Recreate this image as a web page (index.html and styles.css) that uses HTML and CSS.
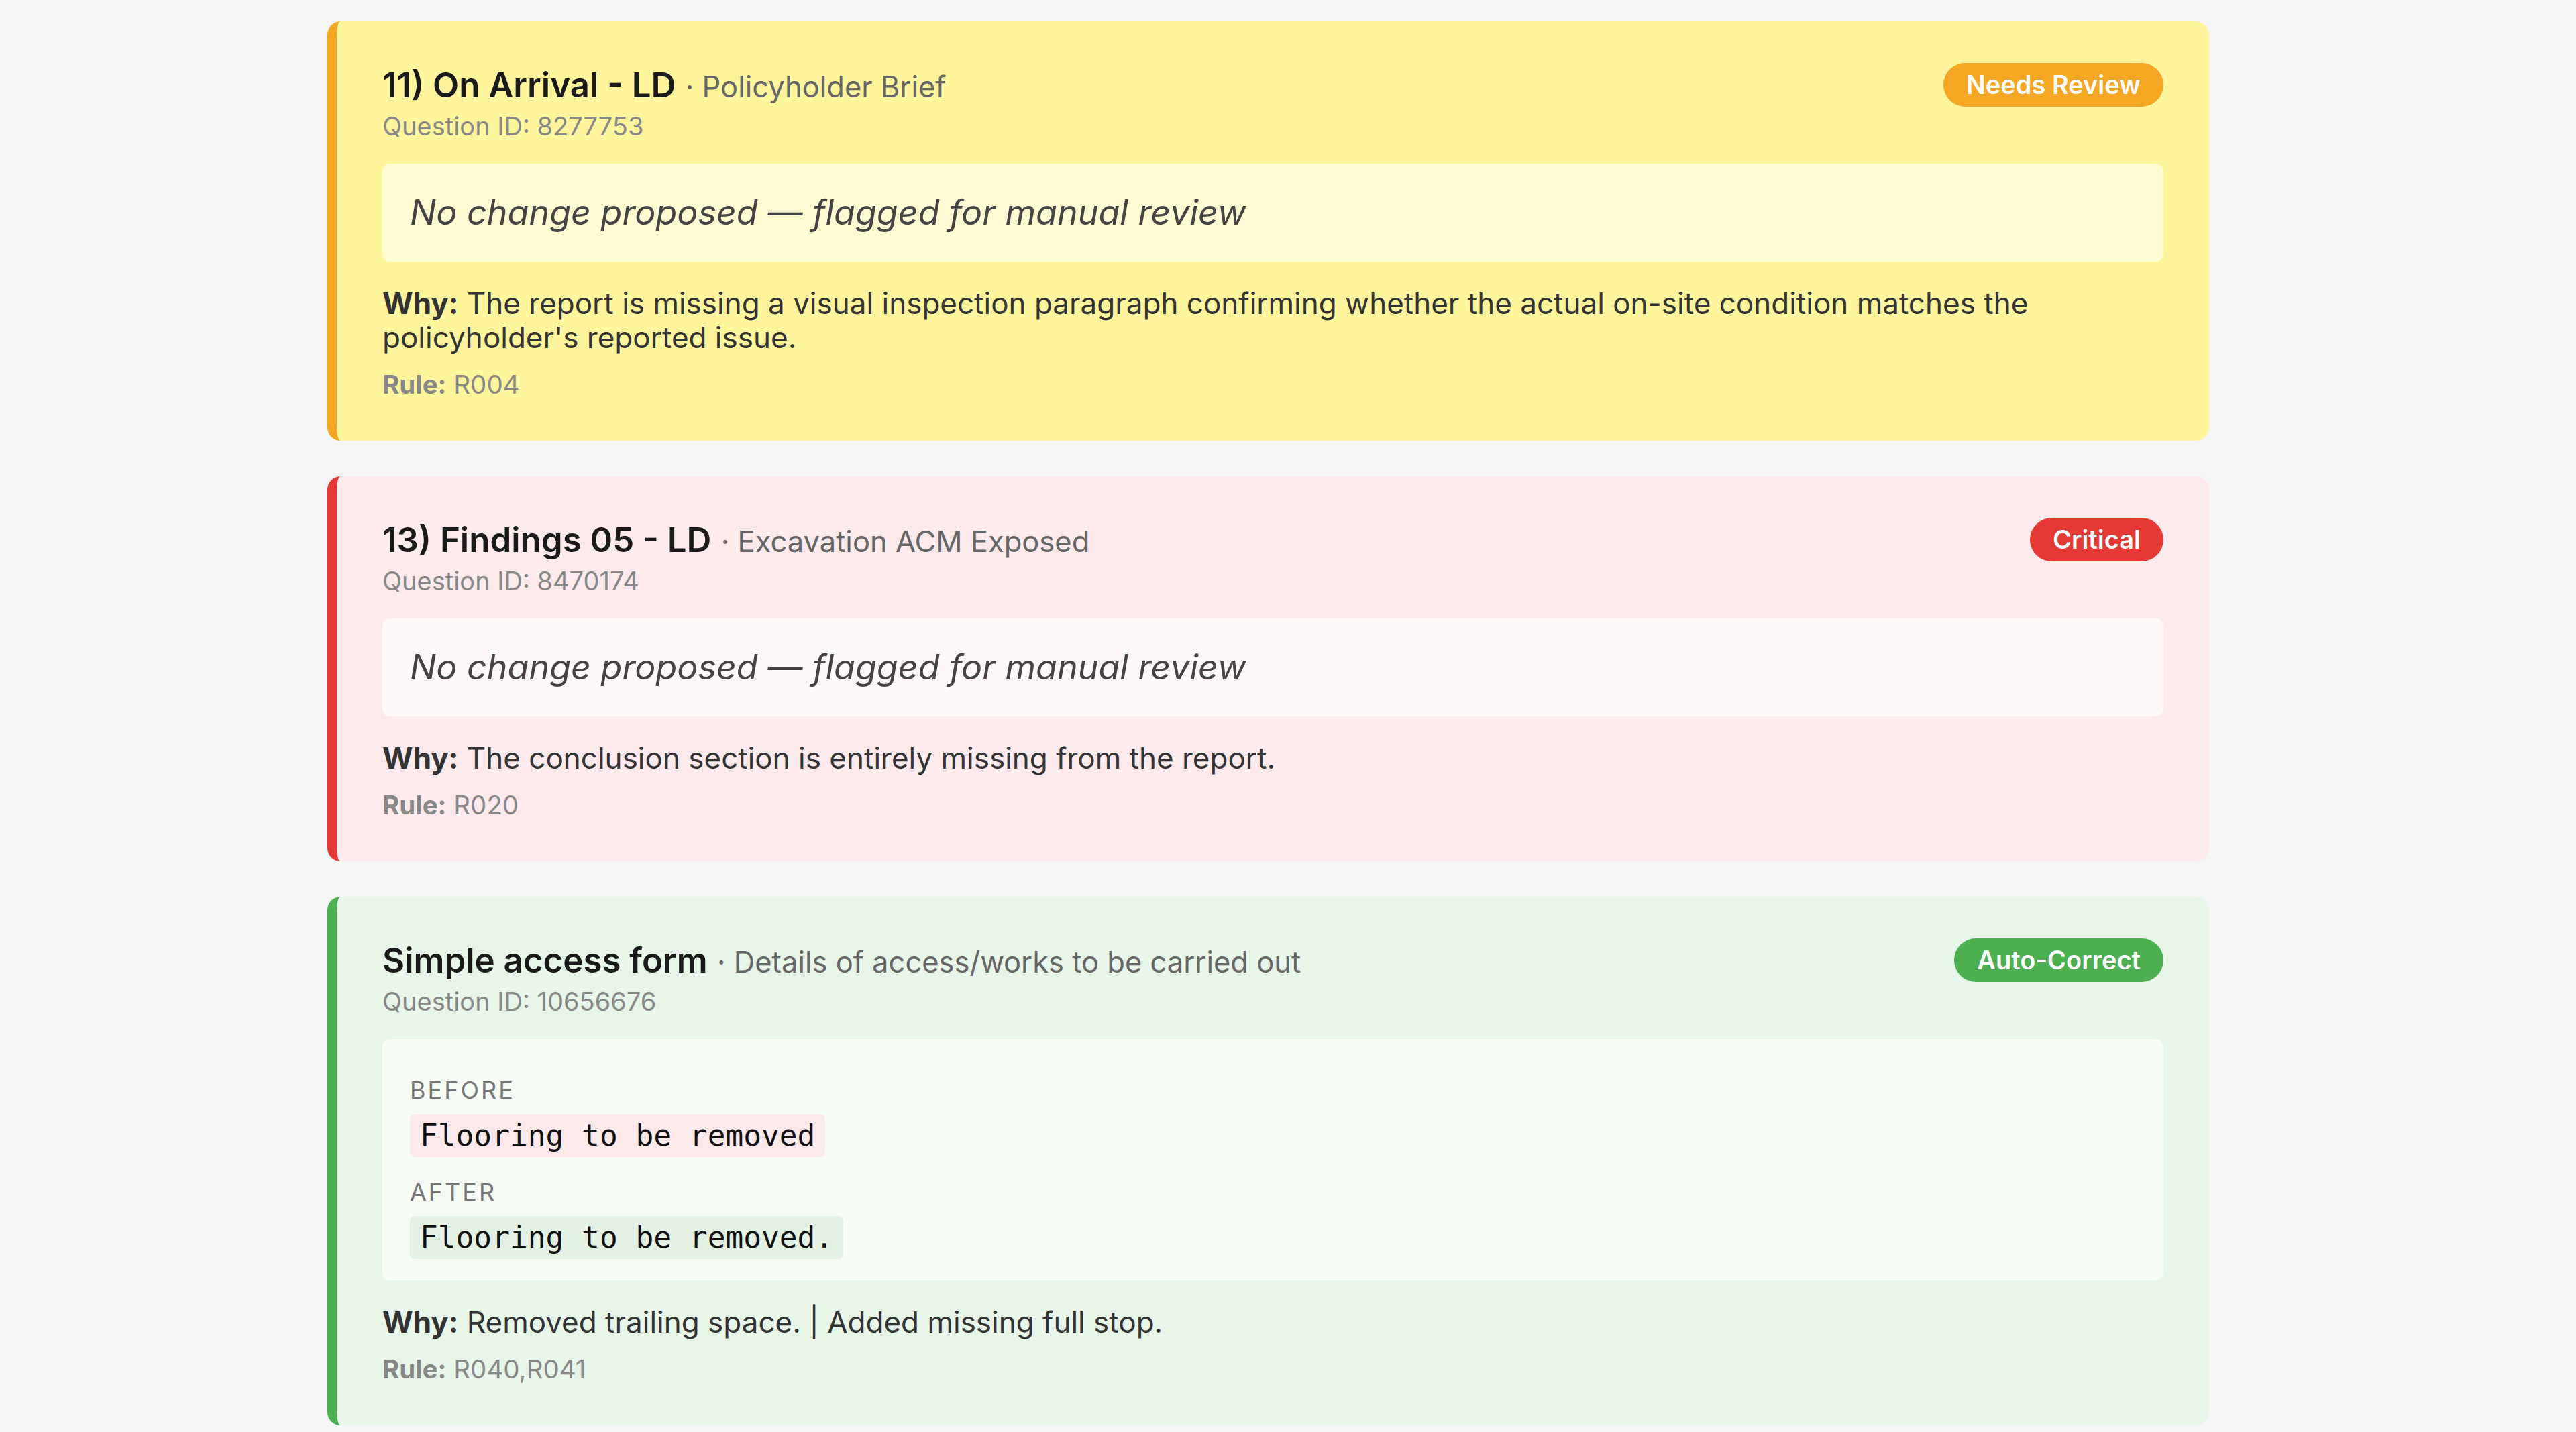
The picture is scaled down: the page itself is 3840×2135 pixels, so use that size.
FILE: index.html
```html
<!DOCTYPE html>
<html lang="en">
<head>
    <meta charset="UTF-8">
    <meta name="viewport" content="width=device-width, initial-scale=1.0">
    <title>Review Queue</title>
    <link rel="stylesheet" href="styles.css">
</head>
<body>
    <main class="queue">
        <article class="card card-review">
            <div class="card-head">
                <div class="card-titles">
                    <div class="card-title"><strong>11) On Arrival - LD</strong> <span class="card-sub">&middot; Policyholder Brief</span></div>
                    <div class="qid">Question ID: 8277753</div>
                </div>
                <span class="badge">Needs Review</span>
            </div>
            <div class="proposal">
                <em>No change proposed &mdash; flagged for manual review</em>
            </div>
            <p class="why"><b>Why:</b> The report is missing a visual inspection paragraph confirming whether the actual on-site condition matches the policyholder's reported issue.</p>
            <p class="rule"><b>Rule:</b> R004</p>
        </article>

        <article class="card card-critical">
            <div class="card-head">
                <div class="card-titles">
                    <div class="card-title"><strong>13) Findings 05 - LD</strong> <span class="card-sub">&middot; Excavation ACM Exposed</span></div>
                    <div class="qid">Question ID: 8470174</div>
                </div>
                <span class="badge">Critical</span>
            </div>
            <div class="proposal">
                <em>No change proposed &mdash; flagged for manual review</em>
            </div>
            <p class="why"><b>Why:</b> The conclusion section is entirely missing from the report.</p>
            <p class="rule"><b>Rule:</b> R020</p>
        </article>

        <article class="card card-auto">
            <div class="card-head">
                <div class="card-titles">
                    <div class="card-title"><strong>Simple access form</strong> <span class="card-sub">&middot; Details of access/works to be carried out</span></div>
                    <div class="qid">Question ID: 10656676</div>
                </div>
                <span class="badge">Auto-Correct</span>
            </div>
            <div class="proposal diff">
                <div class="diff-block">
                    <div class="diff-label">Before</div>
                    <code class="diff-code diff-before">Flooring to be removed</code>
                </div>
                <div class="diff-block">
                    <div class="diff-label">After</div>
                    <code class="diff-code diff-after">Flooring to be removed.</code>
                </div>
            </div>
            <p class="why"><b>Why:</b> Removed trailing space. | Added missing full stop.</p>
            <p class="rule"><b>Rule:</b> R040,R041</p>
        </article>
    </main>
</body>
</html>
```
FILE: styles.css
```css
body {
    font-family: Inter, 'Noto Sans', sans-serif;
    background-color: #f5f5f5;
    color: #333;
    margin: 0;
    padding: 32px 547px 0 488px;
}
.queue {
    display: flex;
    flex-direction: column;
    gap: 53px;
}
.card {
    border-radius: 20px;
    border-left: 14px solid transparent;
    padding: 62px 68px 61px 68px;
}
.card-review {
    background-color: #fff59d;
    border-left-color: #f5a623;
}
.card-critical {
    background-color: #fdeaec;
    border-left-color: #e53935;
}
.card-auto {
    background-color: #e8f5e9;
    border-left-color: #4caf50;
}
.card-head {
    display: flex;
    justify-content: space-between;
    align-items: flex-start;
}
.card-title {
    font-size: 51px;
    line-height: 66px;
    color: #1a1a1a;
}
.card-title strong {
    font-weight: 600;
}
.card-sub {
    font-size: 43.5px;
    color: #666;
}
.qid {
    margin-top: 4px;
    font-size: 38px;
    line-height: 45px;
    color: #888;
}
.badge {
    display: inline-block;
    padding: 10px 34px;
    line-height: 45px;
    font-size: 38px;
    font-weight: 600;
    color: white;
    border-radius: 40px;
}
.card-review .badge {
    background-color: #f5a623;
}
.card-critical .badge {
    background-color: #e53935;
}
.card-auto .badge {
    background-color: #4caf50;
}
.proposal {
    margin-top: 33px;
    padding: 40px 41px;
    border-radius: 12px;
    background-color: rgba(255, 255, 255, 0.55);
    font-size: 52px;
    line-height: 66px;
    color: #444;
}
.card-critical .proposal {
    background-color: rgba(255, 255, 255, 0.65);
}
.diff {
    padding: 54px 41px 32px;
    background-color: rgba(255, 255, 255, 0.6);
}
.diff-block + .diff-block {
    margin-top: 30px;
}
.diff-label {
    font-size: 36px;
    line-height: 45px;
    letter-spacing: 3px;
    text-transform: uppercase;
    color: #777;
    margin-bottom: 9px;
}
.diff-code {
    display: inline-block;
    font-family: 'DejaVu Sans Mono', monospace;
    font-size: 44.5px;
    line-height: 52px;
    padding: 6px 15px;
    border-radius: 8px;
    color: #111;
    white-space: pre;
}
.diff-before {
    background-color: #fde8ea;
}
.diff-after {
    background-color: #e2f1e3;
}
.why {
    margin: 37px 0 0;
    font-size: 44px;
    line-height: 51px;
    color: #333;
}
.rule {
    margin: 22px 0 0;
    font-size: 38.5px;
    line-height: 45px;
    color: #888;
}
```
